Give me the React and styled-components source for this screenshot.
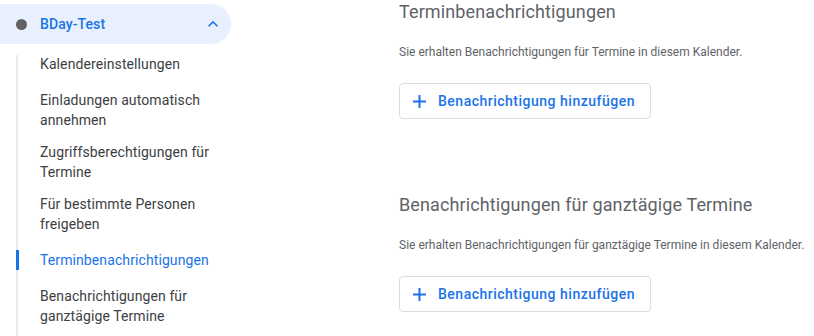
import React from "react";
import styled, { createGlobalStyle } from "styled-components";

const GlobalStyle = createGlobalStyle`
  html, body {
    margin: 0;
    padding: 0;
    background: #ffffff;
    overflow: hidden;
  }
  body {
    font-family: Roboto, "Liberation Sans", Arial, sans-serif;
    -webkit-font-smoothing: antialiased;
  }
`;

const Page = styled.div`
  display: flex;
  width: 814px;
  height: 336px;
  overflow: hidden;
`;

const Sidebar = styled.aside`
  width: 231px;
  flex-shrink: 0;
  padding-top: 4px;
`;

const CalendarHeader = styled.div`
  display: flex;
  align-items: center;
  height: 40px;
  padding-left: 16px;
  padding-right: 8px;
  background: #e8f0fe;
  border-radius: 0 20px 20px 0;
  box-sizing: border-box;
`;

const Dot = styled.span`
  width: 11px;
  height: 11px;
  border-radius: 50%;
  background: ${(p) => p.color};
  flex-shrink: 0;
`;

const CalendarName = styled.span`
  flex: 1;
  margin-left: 13px;
  font-size: 14px;
  font-weight: 500;
  color: #1a73e8;
  letter-spacing: 0.1px;
`;

const NavList = styled.ul`
  position: relative;
  list-style: none;
  margin: 0 0 0 16px;
  padding: 0;

  &::before {
    content: "";
    position: absolute;
    left: 0;
    top: 11px;
    bottom: -40px;
    width: 2px;
    background: #e8eaed;
  }
`;

const NavItem = styled.li`
  position: relative;
  display: flex;
  align-items: center;
  min-height: 40px;
  padding: 6px 16px 6px 24px;
  box-sizing: border-box;
  font-size: 14px;
  line-height: 20px;
  color: ${(p) => (p.active ? "#1a73e8" : "#3c4043")};
  letter-spacing: 0.1px;

  &::before {
    content: "";
    display: ${(p) => (p.active ? "block" : "none")};
    position: absolute;
    left: 0;
    top: 10px;
    width: 3px;
    height: 20px;
    background: #1a73e8;
  }
`;

const Main = styled.main`
  display: flex;
  flex-direction: column;
  margin-left: 168px;
`;

const Section = styled.section`
  display: flex;
  flex-direction: column;
  align-items: flex-start;
  margin-bottom: 74px;
`;

const Heading = styled.h2`
  margin: 0;
  font-size: 18px;
  line-height: 24px;
  font-weight: 400;
  letter-spacing: 0.12px;
  color: #5f6368;
  white-space: nowrap;
`;

const Description = styled.p`
  margin: 20px 0 0;
  font-size: 12px;
  line-height: 16px;
  color: #5f6368;
  white-space: nowrap;
`;

const AddButton = styled.button`
  display: flex;
  align-items: center;
  gap: 12px;
  height: 36px;
  margin-top: 23px;
  padding: 0 15px 0 13px;
  background: #ffffff;
  border: 1px solid #dadce0;
  border-radius: 4px;
  font-family: inherit;
  font-size: 14px;
  font-weight: 500;
  letter-spacing: 0.5px;
  color: #1a73e8;
  cursor: pointer;
`;

const ChevronUp = () => (
  <svg width="20" height="20" viewBox="0 0 24 24" fill="#1a73e8">
    <path d="M12 8l-6 6 1.41 1.41L12 10.83l4.59 4.58L18 14z" />
  </svg>
);

const PlusIcon = () => (
  <svg width="13" height="13" viewBox="0 0 13 13" fill="#1a73e8">
    <path d="M5.5 0h2v13h-2z M0 5.5h13v2H0z" />
  </svg>
);

const navItems = [
  "Kalendereinstellungen",
  "Einladungen automatisch annehmen",
  "Zugriffsberechtigungen für Termine",
  "Für bestimmte Personen freigeben",
  "Terminbenachrichtigungen",
  "Benachrichtigungen für ganztägige Termine",
];

const sections = [
  {
    title: "Terminbenachrichtigungen",
    text: "Sie erhalten Benachrichtigungen für Termine in diesem Kalender.",
  },
  {
    title: "Benachrichtigungen für ganztägige Termine",
    text: "Sie erhalten Benachrichtigungen für ganztägige Termine in diesem Kalender.",
  },
];

const App = () => {
  return (
    <>
      <GlobalStyle />
      <Page>
        <Sidebar>
          <CalendarHeader>
            <Dot color="#616161" />
            <CalendarName>BDay-Test</CalendarName>
            <ChevronUp />
          </CalendarHeader>
          <NavList>
            {navItems.map((label) => (
              <NavItem key={label} active={label === "Terminbenachrichtigungen"}>
                {label}
              </NavItem>
            ))}
          </NavList>
        </Sidebar>
        <Main>
          {sections.map((s) => (
            <Section key={s.title}>
              <Heading>{s.title}</Heading>
              <Description>{s.text}</Description>
              <AddButton>
                <PlusIcon />
                Benachrichtigung hinzufügen
              </AddButton>
            </Section>
          ))}
        </Main>
      </Page>
    </>
  );
};

export default App;
